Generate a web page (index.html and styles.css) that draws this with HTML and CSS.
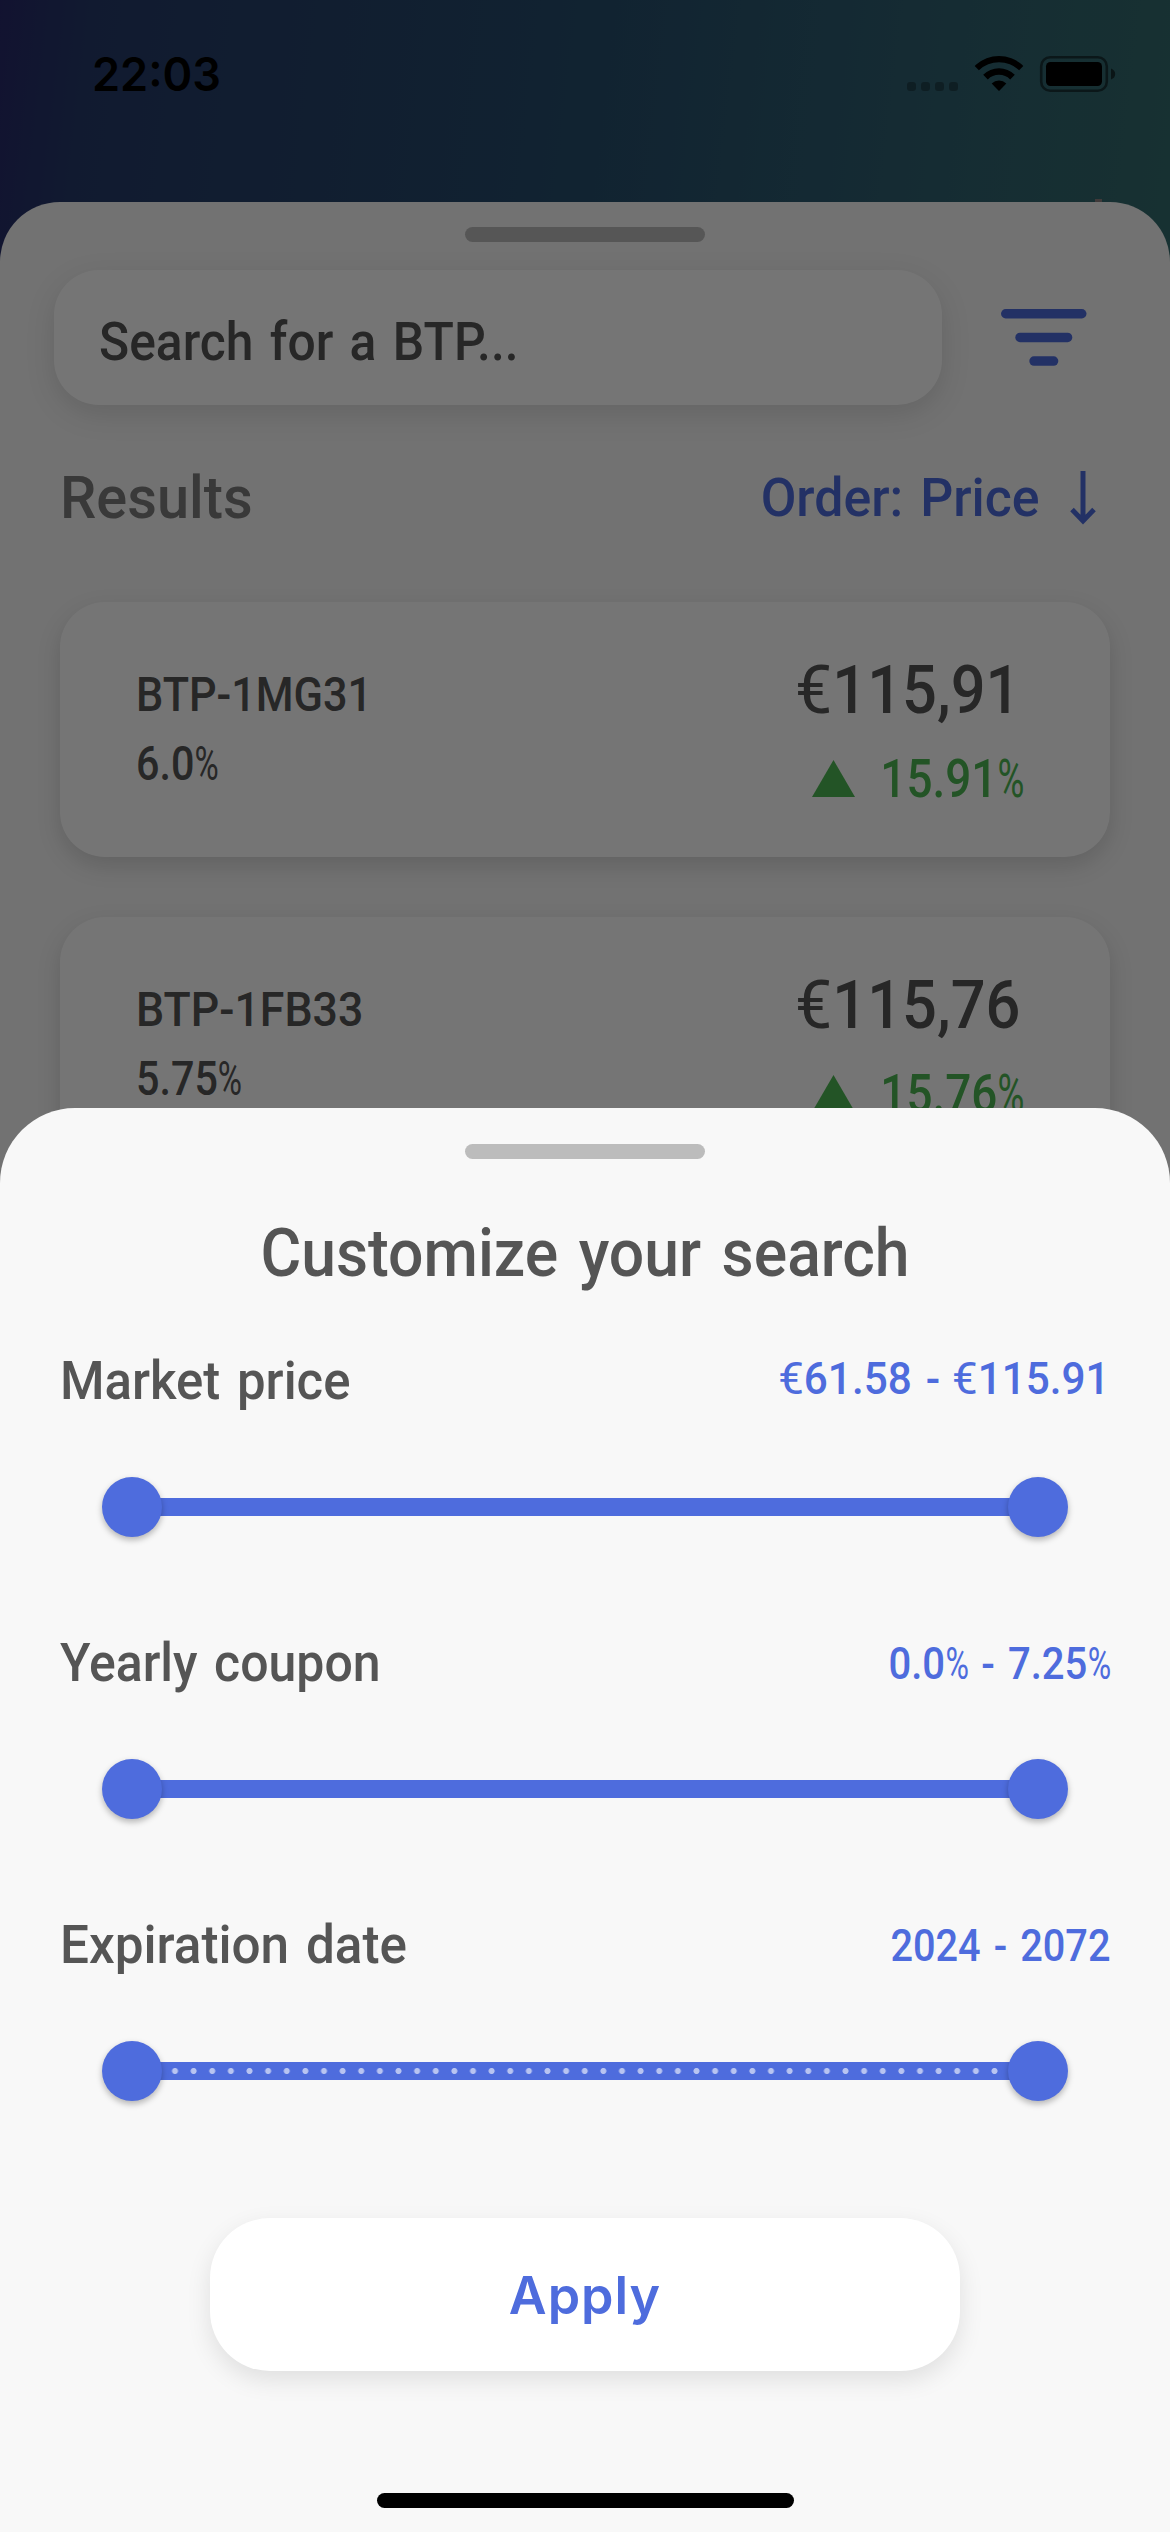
FILE: index.html
```html
<!DOCTYPE html>
<html lang="en">
<head>
<meta charset="utf-8">
<title>BTP search</title>
<link rel="stylesheet" href="styles.css">
</head>
<body>
<div class="screen">
  <header class="status">
    <span class="time">22:03</span>
    <svg class="status-icons" width="209" height="38" viewBox="907 55 209 38">
      <g fill="#000" opacity=".3">
        <rect x="907" y="82" width="9" height="9" rx="3"/>
        <rect x="921" y="82" width="9" height="9" rx="3"/>
        <rect x="935" y="82" width="9" height="9" rx="3"/>
        <rect x="949" y="82" width="9" height="9" rx="3"/>
      </g>
      <path d="M974.700 66.100 Q975.200 65.400 975.900 64.800 A34.500 34.500 0 0 1 1022.100 64.800 Q1022.800 65.400 1023.300 66.100 L1019.100 70.300 A29 29 0 0 0 978.900 70.300Z"/>
      <path d="M983.200 74.800 A22.500 22.500 0 0 1 1014.800 74.800 L1010.200 79.400 A16 16 0 0 0 987.800 79.400Z"/>
      <path d="M991.700 83.400 A10.500 10.500 0 0 1 1006.300 83.400 L999.600 90.500 Q999 91 998.400 90.500Z"/>
      <rect x="1041.200" y="57.200" width="65.600" height="33.600" rx="9" fill="none" stroke="#000" stroke-opacity=".5" stroke-width="2.600"/>
      <rect x="1046" y="62" width="56" height="24" rx="4.500"/>
      <path d="M1111 68.500 Q1115.200 70 1115.200 74 T1111 79.500Z" opacity=".55"/>
    </svg>
    <i class="peek"></i>
  </header>

  <main class="results-sheet">
    <div class="handle"></div>
    <div class="search-row">
      <div class="search"><span class="search-text">Search for a BTP...</span></div>
      <svg class="filter-icon" width="86" height="57" viewBox="0 0 86 57" fill="#4e6cdd">
        <rect x="0" y="0" width="85.500" height="9.500" rx="4.700"/>
        <rect x="14.300" y="23.700" width="57" height="9.500" rx="4.700"/>
        <rect x="28.300" y="47.300" width="29" height="9.500" rx="4.700"/>
      </svg>
    </div>
    <div class="results-head">
      <h2 class="results-title">Results</h2>
      <div class="order">
        <span class="order-text">Order: Price</span>
        <svg width="26" height="54" viewBox="0 0 26 54" fill="none" stroke="#4e6cdd" stroke-width="5"><path d="M13 0V49M2 38.500L13 50L24 38.500"/></svg>
      </div>
    </div>
    <div class="list">
      <article class="card">
        <div class="bond">
          <span class="name">BTP-1MG31</span>
          <span class="coupon">6.0<i class="pct">%</i></span>
        </div>
        <div class="quote">
          <span class="price"><i class="euro">€</i>115,91</span>
          <span class="change"><svg width="43" height="37" viewBox="0 0 43 37"><path d="M21.500 0L43 37H0Z" fill="#4eb753"/></svg><span class="change-text">15.91<i class="pct">%</i></span></span>
        </div>
      </article>
      <article class="card">
        <div class="bond">
          <span class="name name-b">BTP-1FB33</span>
          <span class="coupon">5.75<i class="pct">%</i></span>
        </div>
        <div class="quote">
          <span class="price"><i class="euro">€</i>115,76</span>
          <span class="change"><svg width="43" height="37" viewBox="0 0 43 37"><path d="M21.500 0L43 37H0Z" fill="#4eb753"/></svg><span class="change-text">15.76<i class="pct">%</i></span></span>
        </div>
      </article>
    </div>
  </main>

  <div class="scrim"></div>

  <section class="filter-sheet">
    <div class="handle"></div>
    <h1 class="title">Customize your search</h1>
    <div class="filters">
      <div class="filter">
        <div class="filter-head"><span class="label label-price">Market price</span><span class="value value-price"><i class="euro">€</i>61.58 - <i class="euro">€</i>115.91</span></div>
        <div class="slider"><b class="thumb"></b><b class="track"></b><b class="thumb"></b></div>
      </div>
      <div class="filter">
        <div class="filter-head"><span class="label label-coupon">Yearly coupon</span><span class="value value-coupon">0.0<i class="pct">%</i> - 7.25<i class="pct">%</i></span></div>
        <div class="slider"><b class="thumb"></b><b class="track"></b><b class="thumb"></b></div>
      </div>
      <div class="filter">
        <div class="filter-head"><span class="label label-date">Expiration date</span><span class="value value-date">2024 - 2072</span></div>
        <div class="slider"><b class="thumb"></b><b class="track ticks"></b><b class="thumb"></b></div>
      </div>
    </div>
    <button class="apply">Apply</button>
    <div class="home"></div>
  </section>
</div>
</body>
</html>
```
FILE: styles.css
```css
* { box-sizing: border-box; word-spacing: .08em; }

body {
  margin: 0;
  font-family: Roboto, "Liberation Sans", sans-serif;
  font-weight: 500;
  color: #555;
}

h1, h2 { margin: 0; font-weight: 500; }
svg { display: block; flex: none; }

.screen {
  position: relative;
  width: 1170px;
  height: 2532px;
  overflow: hidden;
  display: flex;
  flex-direction: column;
  background: linear-gradient(97deg, #28296a 0, #263a69 8%, #254a6b 45%, #2e5e70 75%, #336c6d 100%) 0 0 / 1170px 300px no-repeat;
}

/* Status bar */
.status {
  position: relative;
  height: 202px;
  padding: 0 54px 54px 92px;
  display: flex;
  align-items: center;
  justify-content: space-between;
  color: #000;
}
.time {
  font: 600 47px/60px Inter, sans-serif;
  transform: scaleX(.96);
  transform-origin: left;
}
/* Sliver of the page that shows above the sheet */
.peek {
  position: absolute;
  right: 68px;
  bottom: 0;
  width: 7px;
  height: 3px;
  background: #8c7f7f;
}

/* Results sheet */
.results-sheet {
  flex: 1;
  padding-top: 24.5px;
  background: #f8f8f8;
  border-radius: 60px 60px 0 0;
  overflow: hidden;
}
.handle {
  width: 240px;
  height: 15px;
  margin: 0 auto;
  border-radius: 7.5px;
  background: #bcbcbc;
}
.search-row {
  display: flex;
  align-items: center;
  gap: 59px;
  margin: 28.5px 0 0 54px;
}
.search {
  width: 888px;
  height: 135px;
  padding: 8px 0 0 45px;
  display: flex;
  align-items: center;
  background: #fff;
  border-radius: 45px;
  box-shadow: 0 9px 30px rgba(0, 0, 0, .12);
  font-size: 54px;
}
.search-text { transform: scaleX(.922); transform-origin: left; }

.results-head {
  height: 60px;
  margin-top: 62.5px;
  padding: 0 74px 0 60px;
  display: flex;
  align-items: center;
  justify-content: space-between;
}
.results-title {
  font-size: 60px;
  line-height: 60px;
  color: #7c7c7c;
  transform: scaleX(.962);
  transform-origin: left;
}
.order {
  display: flex;
  align-items: center;
  gap: 30px;
  font-size: 54px;
  line-height: 60px;
  color: #4e6cdd;
}
.order-text { transform: scaleX(.96); transform-origin: right; }

.list {
  display: flex;
  flex-direction: column;
  gap: 60px;
  margin: 74.5px 60px 0;
}
.card {
  height: 255px;
  padding: 0 90px 0 76px;
  display: flex;
  align-items: center;
  justify-content: space-between;
  background: #fff;
  border-radius: 45px;
  box-shadow: 0 9px 24px rgba(0, 0, 0, .14);
}
.bond {
  display: flex;
  flex-direction: column;
  align-items: flex-start;
  padding-bottom: 2px;
  font-size: 48px;
  line-height: 69px;
}
.name { transform: scaleX(.9); transform-origin: left; }
.name-b { transform: scaleX(.93); }
.coupon { transform: scaleX(.86); transform-origin: left; }

/* Narrow, light percent sign */
.pct {
  display: inline-block;
  font-style: normal;
  font-weight: 400;
  transform: scaleX(.8);
  transform-origin: left;
  margin-right: -.16em;
}
.euro {
  display: inline-block;
  font-style: normal;
  font-weight: 400;
  transform: scaleX(1.08);
  transform-origin: right;
}

.quote {
  display: flex;
  flex-direction: column;
  align-items: flex-end;
  padding-top: 10px;
  line-height: 88px;
  white-space: nowrap;
}
.price { font-size: 66px; transform: scaleX(.93); transform-origin: right; }
.change {
  width: 208px;
  display: flex;
  align-items: center;
  justify-content: space-between;
  font-size: 54px;
  color: #4eb753;
}
.change-text { transform: scaleX(.85); transform-origin: right; }

.scrim {
  position: absolute;
  inset: 0;
  background: rgba(0, 0, 0, .54);
}

/* Filter sheet */
.filter-sheet {
  position: absolute;
  left: 0;
  right: 0;
  bottom: 0;
  height: 1424px;
  padding-top: 35.5px;
  background: #f8f8f8;
  border-radius: 75px 75px 0 0;
}
.title {
  margin-top: 55px;
  font-size: 66px;
  line-height: 80px;
  text-align: center;
  transform: scaleX(.946);
}
.filters {
  display: flex;
  flex-direction: column;
  gap: 93.5px;
  margin: 55px 60px 0;
}
.filter-head {
  height: 64px;
  display: flex;
  align-items: center;
  justify-content: space-between;
}
.label { font-size: 54px; line-height: 64px; transform-origin: left; }
.label-price { transform: scaleX(.943); }
.label-coupon { transform: scaleX(.926); }
.label-date { transform: scaleX(.949); }
.value { font-size: 45px; line-height: 64px; color: #4e6cdd; transform-origin: right; }
.value-price { transform: translateY(-2px) scaleX(.94); }
.value-coupon { transform: translateY(1px) scaleX(.89); }
.value-date { transform: translateY(1px) scaleX(.882); }

.slider {
  display: flex;
  align-items: center;
  margin: 64.5px 42px 0;
}
.thumb {
  position: relative;
  z-index: 1;
  width: 60px;
  height: 60px;
  border-radius: 50%;
  background: #4e6cdd;
  box-shadow: 0 3px 6px rgba(0, 0, 0, .28);
}
.track {
  flex: 1;
  height: 18px;
  margin: 0 -5px;
  background: #4e6cdd;
}
.ticks {
  background: #4e6cdd radial-gradient(circle, #b8c4f1 2.6px, transparent 3.4px) 8.7px 0 / 18.625px 18px;
}

.apply {
  display: block;
  width: 750px;
  height: 153px;
  margin: 116.5px auto 0;
  padding: 3px 0 0;
  border: 0;
  border-radius: 60px;
  background: #fff;
  box-shadow: 0 9px 24px rgba(0, 0, 0, .1);
  font: 600 52px/64px Inter, sans-serif;
  letter-spacing: 1px;
  color: #4e6cdd;
}
.home {
  width: 417px;
  height: 15px;
  margin: 122.5px auto 0;
  border-radius: 7.5px;
  background: #000;
}
```
